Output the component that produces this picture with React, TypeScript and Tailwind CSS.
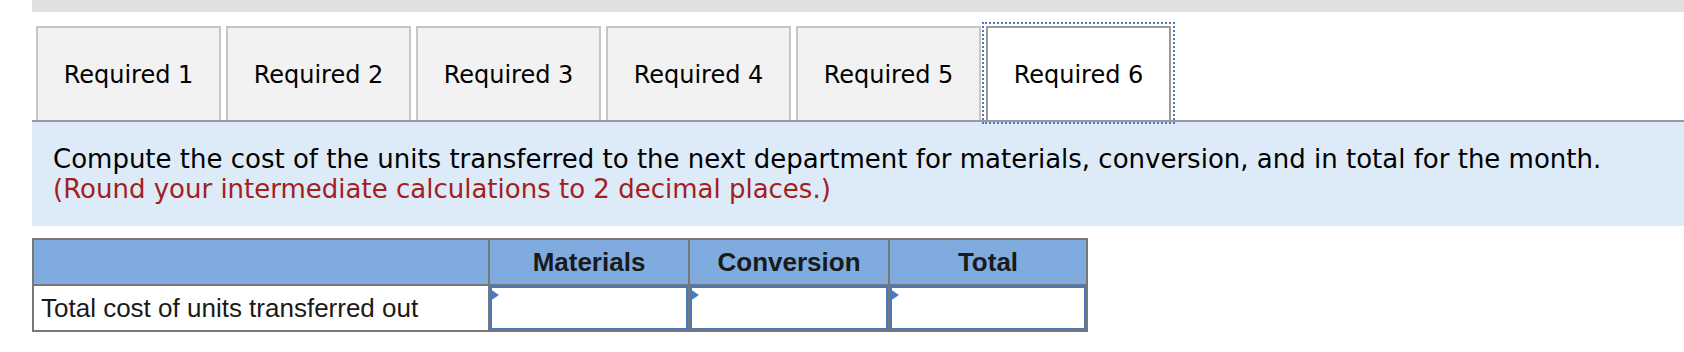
const tabs = ["Required 1", "Required 2", "Required 3", "Required 4", "Required 5", "Required 6"]
const cols = ["Materials", "Conversion", "Total"]

function Tab({ label, active }: { label: string; active: boolean }) {
  return (
    <div
      className={
        active
          ? "relative flex h-[94px] w-[185px] items-center justify-center border-2 border-b-0 border-[#9a9a9a] bg-white pt-[2px]"
          : "flex h-[94px] w-[185px] items-center justify-center border-2 border-b-0 border-[#c6c6c6] bg-[#f2f2f2] pt-[2px]"
      }
    >
      <span className="text-[24px] text-black">{label}</span>
      {/* focus ring */}
      {active && (
        <span className="pointer-events-none absolute -top-[6px] -right-[6px] -bottom-[4px] -left-[6px] border-2 border-dotted border-[#4a7bbf]" />
      )}
    </div>
  )
}

function InputCell({ last }: { last?: boolean }) {
  return (
    <div className={last ? "flex-1 border-l-2 border-[#777]" : "w-[200px] border-l-2 border-[#777]"}>
      <div className="relative h-full w-full border-2 border-[#4a78b8] bg-white">
        <span className="absolute left-[-2px] top-[1px] h-0 w-0 border-y-[6px] border-l-[9px] border-y-transparent border-l-[#4a78b8]" />
      </div>
    </div>
  )
}

export default function App() {
  return (
    <div className="h-[352px] w-full overflow-hidden bg-white font-['DejaVu_Sans',sans-serif]">
      {/* top strip */}
      <div className="ml-[32px] h-[12px] bg-[#e0e0e0]" />

      {/* tabs */}
      <div className="ml-[32px] mt-[14px] flex gap-[5px] border-b-2 border-[#9a9a9a] pl-[4px]">
        {tabs.map((t, i) => (
          <Tab key={t} label={t} active={i === tabs.length - 1} />
        ))}
      </div>

      {/* instructions */}
      <div className="ml-[32px] h-[104px] bg-[#ddebf8] pl-[21px] pt-[22px] text-[26px] leading-[30px]">
        <p className="text-black">
          Compute the cost of the units transferred to the next department for materials, conversion, and in total for
          the month.
        </p>
        <p className="text-[#a3201c]">(Round your intermediate calculations to 2 decimal places.)</p>
      </div>

      {/* answer table */}
      <div className="ml-[32px] mt-[12px] w-[1056px] border-2 border-[#777] font-['Liberation_Sans',Arial,sans-serif] text-[26px] text-[#1a1a1a]">
        <div className="flex h-[46px] border-b-2 border-[#777] bg-[#80abdf] font-bold">
          <div className="w-[454px]" />
          {cols.map((c, i) => (
            <div
              key={c}
              className={
                i === cols.length - 1
                  ? "flex flex-1 items-center justify-center border-l-2 border-[#777]"
                  : "flex w-[200px] items-center justify-center border-l-2 border-[#777]"
              }
            >
              {c}
            </div>
          ))}
        </div>
        <div className="flex h-[44px]">
          <div className="flex w-[454px] items-center pl-[7px]">Total cost of units transferred out</div>
          <InputCell />
          <InputCell />
          <InputCell last />
        </div>
      </div>
    </div>
  )
}
